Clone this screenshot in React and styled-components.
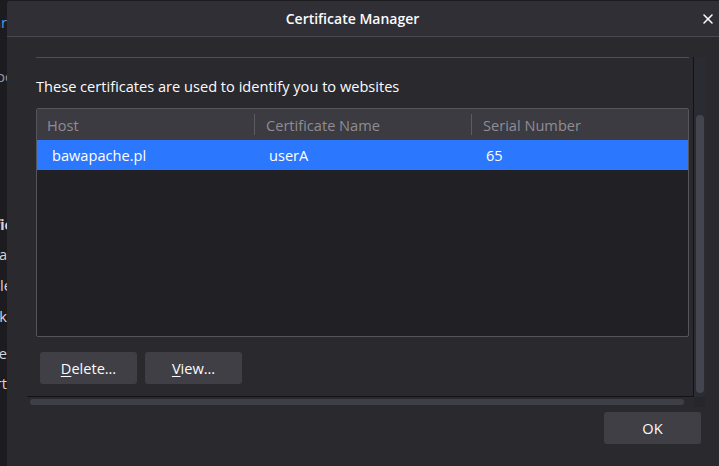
import styled, { createGlobalStyle } from "styled-components";
import { X } from "lucide-react";

const GlobalStyle = createGlobalStyle`
  html, body {
    margin: 0;
    padding: 0;
    background: #1c1b20;
  }
  body {
    font-family: "Open Sans", "Noto Sans", sans-serif;
    font-size: 14.6px;
    color: #fbfbfe;
  }
`;

const Page = styled.div`
  width: 719px;
  height: 466px;
  display: flex;
  overflow: hidden;
  background: #1c1b20;
`;

const Backdrop = styled.div`
  width: 7px;
  flex: none;
  overflow: hidden;
  display: flex;
  flex-direction: column;
`;

const BackLine = styled.div`
  display: flex;
  justify-content: flex-end;
  white-space: nowrap;
  height: 20px;
  line-height: 20px;
  margin-top: ${({ gap }) => gap}px;
  margin-right: -${({ overhang }) => overhang || 0}px;
  color: ${({ tone }) =>
    tone === "link" ? "#5a9ae8" : tone === "dim" ? "#9a99a1" : "#d6d5dc"};
  font-weight: ${({ bold }) => (bold ? 700 : 400)};
`;

const Dialog = styled.div`
  flex: none;
  width: 716px;
  height: 470px;
  margin-top: 1px;
  background: #2a292e;
  border-top-left-radius: 3px;
  display: flex;
  flex-direction: column;
`;

const TitleBar = styled.div`
  height: 35px;
  flex: none;
  display: flex;
  align-items: center;
  background: #302f35;
  border-bottom: 1px solid #4a494f;
  border-top-left-radius: 3px;
`;

const Title = styled.div`
  flex: 1;
  text-align: center;
  font-weight: 600;
  font-size: 14px;
  padding-right: 2px;
`;

const CloseButton = styled.div`
  width: 24px;
  margin-right: -1px;
  display: flex;
  align-items: center;
  justify-content: flex-start;
  color: #fbfbfe;
`;

const ScrollFrame = styled.div`
  margin: 20px 0 0 20px;
  width: 678px;
  height: 350px;
  display: grid;
  grid-template-columns: 1fr 11px;
  grid-template-rows: 1fr 10px;
`;

const Viewport = styled.div`
  border-right: 1px solid #131215;
  border-bottom: 1px solid #131215;
  padding: 0 4px 0 9px;
  overflow: hidden;
  display: flex;
  flex-direction: column;
`;

const TopRule = styled.div`
  height: 1px;
  background: #504f55;
  flex: none;
`;

const Description = styled.div`
  margin-top: 18px;
  line-height: 20px;
  height: 20px;
`;

const Table = styled.div`
  margin-top: 12px;
  height: 227px;
  border: 1px solid #56555b;
  border-radius: 2px;
  background: #212024;
  display: flex;
  flex-direction: column;
`;

const HeaderRow = styled.div`
  height: 31px;
  flex: none;
  display: grid;
  grid-template-columns: repeat(3, 1fr);
  background: #3c3b41;
`;

const HeaderCell = styled.div`
  display: flex;
  align-items: center;
  padding-left: ${({ first }) => (first ? 10 : 11)}px;
  color: #8e8d94;
  border-left: ${({ first }) => (first ? "none" : "1px solid #5c5b61")};
  margin: 5px 0;
  height: 21px;
`;

const Row = styled.div`
  height: 30px;
  display: grid;
  grid-template-columns: repeat(3, 1fr);
  background: ${({ selected }) => (selected ? "#2b78fe" : "transparent")};
  color: #ffffff;
`;

const Cell = styled.div`
  display: flex;
  align-items: center;
  padding-left: 15px;
`;

const ButtonRow = styled.div`
  margin: 15px 0 0 4px;
  display: flex;
  gap: 8px;
`;

const Button = styled.div`
  width: 97px;
  height: 32px;
  border-radius: 3px;
  background: #403f45;
  display: flex;
  align-items: center;
  justify-content: center;
  color: #fbfbfe;
  u {
    text-decoration-thickness: 1px;
    text-underline-offset: 2px;
  }
`;

const VTrack = styled.div`
  background: #2a2b33;
  padding: 58px 1px 4px 2px;
  display: flex;
`;

const VThumb = styled.div`
  flex: 1;
  border-radius: 4px;
  background: #45454f;
`;

const HTrack = styled.div`
  padding: 2px 10px 2px 3px;
  display: flex;
`;

const HThumb = styled.div`
  flex: 1;
  border-radius: 3px;
  background: #3f3f48;
`;

const Corner = styled.div`
  background: #26262d;
`;

const Footer = styled.div`
  display: flex;
  justify-content: flex-end;
  padding: 5px 22px 0 0;
`;

const backLines = [
  { text: "Sear", gap: 12, tone: "link" },
  { text: "Bloc", gap: 34, tone: "dim", overhang: 5 },
  { text: "Certific", gap: 128, bold: true, overhang: 5 },
  { text: "Ya", gap: 10 },
  { text: "Handle", gap: 11, overhang: 5 },
  { text: "Ask", gap: 11 },
  { text: "Use", gap: 17 },
  { text: "Cert", gap: 10 },
];

const certificates = [
  { host: "bawapache.pl", name: "userA", serial: "65", selected: true },
];

function App() {
  return (
    <>
      <GlobalStyle />
      <Page>
        <Backdrop>
          {backLines.map((l) => (
            <BackLine
              key={l.text}
              gap={l.gap}
              tone={l.tone}
              bold={l.bold}
              overhang={l.overhang}
            >
              {l.text}
            </BackLine>
          ))}
        </Backdrop>
        <Dialog>
          <TitleBar>
            <Title>Certificate Manager</Title>
            <CloseButton>
              <X size={16} strokeWidth={2.3} />
            </CloseButton>
          </TitleBar>
          <ScrollFrame>
            <Viewport>
              <TopRule />
              <Description>
                These certificates are used to identify you to websites
              </Description>
              <Table>
                <HeaderRow>
                  <HeaderCell first>Host</HeaderCell>
                  <HeaderCell>Certificate Name</HeaderCell>
                  <HeaderCell>Serial Number</HeaderCell>
                </HeaderRow>
                {certificates.map((c) => (
                  <Row key={c.host} selected={c.selected}>
                    <Cell>{c.host}</Cell>
                    <Cell>{c.name}</Cell>
                    <Cell>{c.serial}</Cell>
                  </Row>
                ))}
              </Table>
              <ButtonRow>
                <Button>
                  <span>
                    <u>D</u>elete…
                  </span>
                </Button>
                <Button>
                  <span>
                    <u>V</u>iew…
                  </span>
                </Button>
              </ButtonRow>
            </Viewport>
            <VTrack>
              <VThumb />
            </VTrack>
            <HTrack>
              <HThumb />
            </HTrack>
            <Corner />
          </ScrollFrame>
          <Footer>
            <Button>OK</Button>
          </Footer>
        </Dialog>
      </Page>
    </>
  );
}

export default App;
